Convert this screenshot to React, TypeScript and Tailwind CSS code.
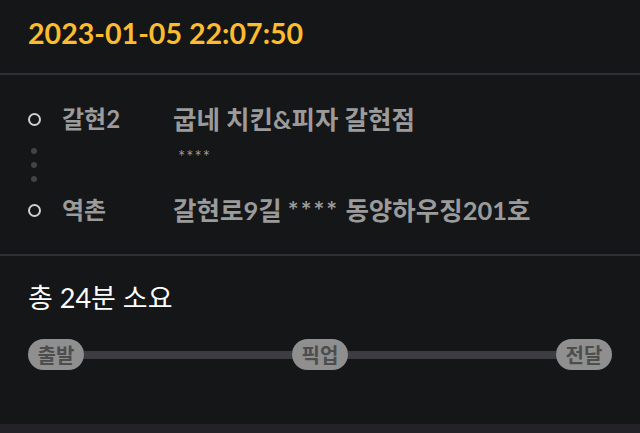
import React from "react";

const font = { fontFamily: "Lato, 'Noto Sans CJK KR', sans-serif" };

function Ring() {
  return <div className="w-[13px] h-[13px] rounded-full border-[2.5px] border-[#cfcfcf] shrink-0" />;
}

function Pill({ label }: { label: string }) {
  return (
    <div className="h-[31px] w-[56px] rounded-full bg-[#8f8f8f] flex items-center justify-center shrink-0">
      <span className="text-[20px] font-bold text-[#4d4d4d] leading-none">{label}</span>
    </div>
  );
}

export default function App() {
  return (
    <div className="w-[640px] h-[433px] bg-[#151618] overflow-hidden flex flex-col" style={font}>
      <div className="h-[73px] px-[28px] pt-[15px]">
        <div className="text-[28.6px] leading-[36px] font-bold text-[#fbbd2f]">2023-01-05 22:07:50</div>
      </div>
      <div className="h-[2px] bg-[#2f3033]" />
      <div className="px-[28px] pt-[28px] pb-[28px]">
        <div className="flex items-center h-[32px]">
          <div className="w-[12px] flex justify-center"><Ring /></div>
          <div className="ml-[22px] w-[111px] text-[24px] font-bold text-[#9b9b9b] leading-[32px]">갈현2</div>
          <div className="text-[25.5px] font-bold text-[#9b9b9b] leading-[32px]">굽네 치킨&amp;피자 갈현점</div>
        </div>
        <div className="flex h-[59px]">
          <div className="w-[12px] flex flex-col items-center justify-center gap-[8px]">
            <div className="w-[6px] h-[6px] rounded-full bg-[#434345]" />
            <div className="w-[6px] h-[6px] rounded-full bg-[#434345]" />
            <div className="w-[6px] h-[6px] rounded-full bg-[#434345]" />
          </div>
          <div className="ml-[138px] mt-[12px] text-[17px] leading-[20px] tracking-[1px] text-[#9b9b9b]">****</div>
        </div>
        <div className="flex items-center h-[32px]">
          <div className="w-[12px] flex justify-center"><Ring /></div>
          <div className="ml-[22px] w-[111px] text-[24px] font-bold text-[#9b9b9b] leading-[32px]">역촌</div>
          <div className="text-[25.5px] font-bold text-[#9b9b9b] leading-[32px]">
            갈현로9길 <span className="tracking-[2px]">****</span> 동양하우징201호
          </div>
        </div>
      </div>
      <div className="h-[2px] bg-[#2f3033]" />
      <div className="px-[28px] pt-[25px] flex-1">
        <div className="text-[27px] leading-[34px] text-white">총 24분 소요</div>
        <div className="mt-[24px] flex items-center">
          <Pill label="출발" />
          <div className="flex-1 h-[8px] bg-[#3d3d41]" />
          <Pill label="픽업" />
          <div className="flex-1 h-[8px] bg-[#3d3d41]" />
          <Pill label="전달" />
        </div>
      </div>
      <div className="h-[9px] bg-[#232327]" />
    </div>
  );
}
